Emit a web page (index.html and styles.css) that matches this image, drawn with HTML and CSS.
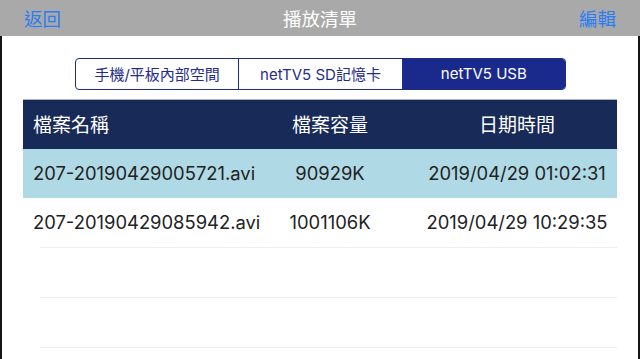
FILE: index.html
```html
<!DOCTYPE html>
<html lang="zh-Hant">
<head>
<meta charset="utf-8">
<title>播放清單</title>
<link rel="stylesheet" href="styles.css">
</head>
<body>
<div class="screen">
  <header class="navbar">
    <span class="nav-btn">返回</span>
    <span class="nav-title">播放清單</span>
    <span class="nav-btn">編輯</span>
  </header>
  <main class="content">
    <div class="segmented">
      <div class="seg">手機/平板內部空間</div>
      <div class="seg">netTV5 SD記憶卡</div>
      <div class="seg active">netTV5 USB</div>
    </div>
    <div class="table">
      <div class="row head">
        <div class="c name">檔案名稱</div>
        <div class="c size">檔案容量</div>
        <div class="c date">日期時間</div>
      </div>
      <div class="row sel">
        <div class="c name">207-20190429005721.avi</div>
        <div class="c size">90929K</div>
        <div class="c date">2019/04/29 01:02:31</div>
      </div>
      <div class="row">
        <div class="c name">207-20190429085942.avi</div>
        <div class="c size">1001106K</div>
        <div class="c date">2019/04/29 10:29:35</div>
      </div>
      <div class="sep"></div>
      <div class="row empty"></div>
      <div class="sep"></div>
      <div class="row empty"></div>
      <div class="sep"></div>
    </div>
  </main>
</div>
</body>
</html>
```

FILE: styles.css
```css
* { box-sizing: border-box; }
html, body {
  margin: 0;
  padding: 0;
  width: 640px;
  height: 359px;
  overflow: hidden;
  background: #fff;
  font-family: "Inter", "Liberation Sans", "Noto Sans CJK TC", sans-serif;
}
.screen {
  width: 640px;
  height: 359px;
  display: flex;
  flex-direction: column;
}
.navbar {
  height: 36px;
  flex: none;
  background: #a9a9a9;
  display: flex;
  align-items: center;
  justify-content: space-between;
  padding: 0 24px 1px 24px;
  font-size: 18.5px;
  font-family: "Noto Sans CJK TC", sans-serif;
}
.nav-btn { color: #2a7df2; }
.nav-title { color: #fff; }
.content {
  flex: 1;
  border-left: 2px solid #151515;
  border-right: 2px solid #151515;
  display: flex;
  flex-direction: column;
}
.segmented {
  margin: 22px 0 0 73px;
  width: 491px;
  height: 32px;
  display: flex;
  border: 1px solid #1f2d8a;
  border-radius: 4px;
  overflow: hidden;
}
.seg {
  flex: 1;
  display: flex;
  align-items: center;
  justify-content: center;
  font-size: 15px;
  color: #1f2d8a;
  font-family: "Inter", "Noto Sans CJK TC", sans-serif;
  padding-bottom: 1px;
}
.seg + .seg { border-left: 1px solid #1f2d8a; }
.seg.active { background: #1a2a8c; color: #fff; }
.table {
  margin: 9px 21px 0 21px;
  border-top: 1px solid #a9aec2;
  display: flex;
  flex-direction: column;
}
.row {
  height: 49px;
  display: grid;
  grid-template-columns: 220px 174px 200px;
  align-items: center;
  font-size: 18.4px;
  color: #222;
}
.row.head {
  background: #182a58;
  color: #fff;
  font-family: "Noto Sans CJK TC", sans-serif;
  font-size: 19px;
}
.row.sel { background: #b0d9e6; }
.row.empty { height: 49px; }
.c { white-space: nowrap; padding-bottom: 2px; }
.c.name { padding-left: 10px; }
.c.size, .c.date { text-align: center; }
.sep {
  height: 1px;
  margin-left: 17px;
  background: #eeeeee;
}
```
